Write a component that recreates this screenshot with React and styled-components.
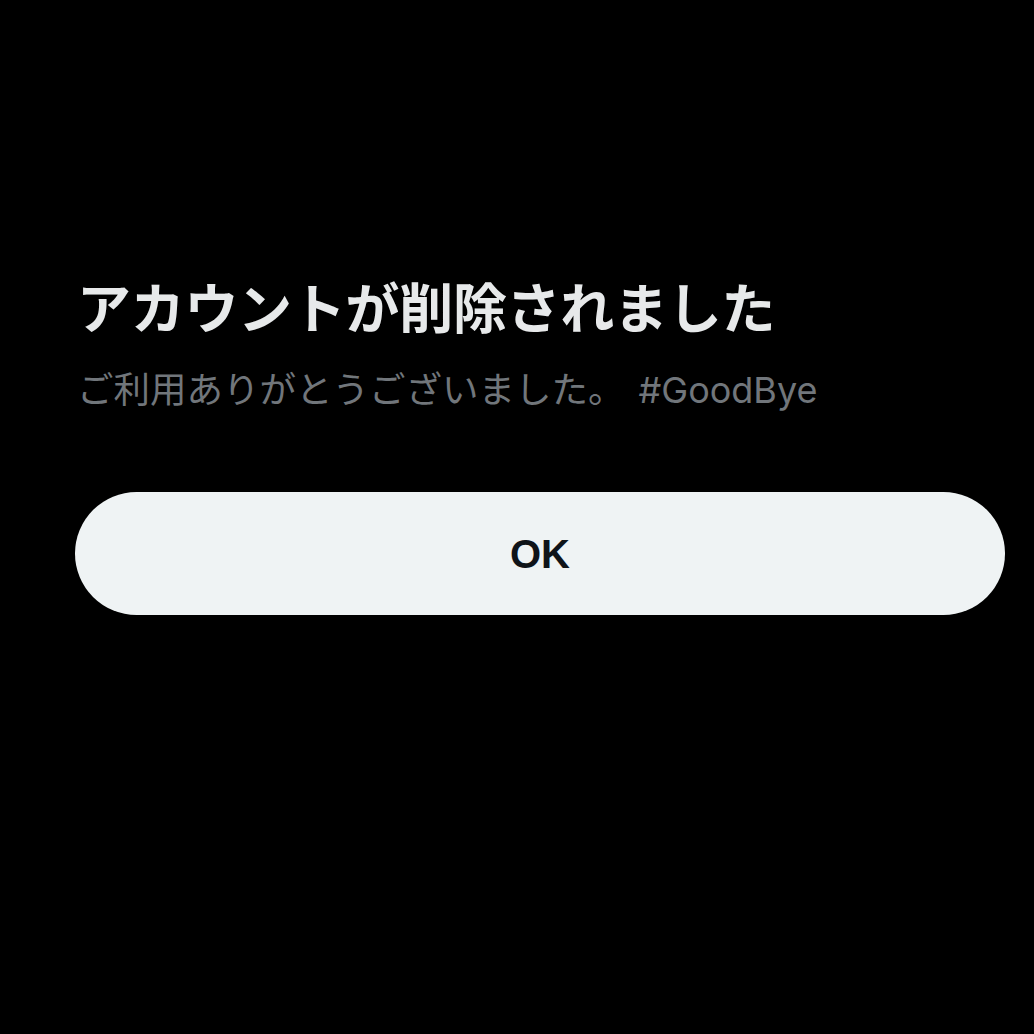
import React from "react"
import styled, { createGlobalStyle } from "styled-components"

const GlobalStyle = createGlobalStyle`
  html, body {
    margin: 0;
    padding: 0;
    background: #000;
  }
  body {
    font-family: "Noto Sans CJK JP", "Liberation Sans", sans-serif;
  }
`

const Screen = styled.div`
  width: 1034px;
  height: 1034px;
  background: #000;
  box-sizing: border-box;
  padding: 270px 29px 0 75px;
  display: flex;
  flex-direction: column;
`

const Title = styled.h1`
  margin: 0 0 0 2px;
  font-size: 54px;
  line-height: 72px;
  font-weight: 700;
  color: #e7e9ea;
  letter-spacing: -0.3px;
`

const Message = styled.p`
  margin: 22px 0 0 2px;
  font-size: 36.5px;
  line-height: 48px;
  font-weight: 400;
  color: #71767b;
`

const Tag = styled.span`
  margin-left: 14px;
  font-family: Inter, "Noto Sans", sans-serif;
  font-size: 36px;
`

const OkButton = styled.button`
  margin-top: 78px;
  height: 123px;
  width: 100%;
  border: none;
  border-radius: 62px;
  background: #eff3f4;
  color: #0f1419;
  font-family: "Liberation Sans", Arial, sans-serif;
  font-size: 40px;
  font-weight: 700;
  padding: 2px 0 0;
  cursor: pointer;
`

export default () => (
  <>
    <GlobalStyle />
    <Screen>
      <Title>アカウントが削除されました</Title>
      <Message>
        ご利用ありがとうございました。<Tag>#GoodBye</Tag>
      </Message>
      <OkButton>OK</OkButton>
    </Screen>
  </>
)
